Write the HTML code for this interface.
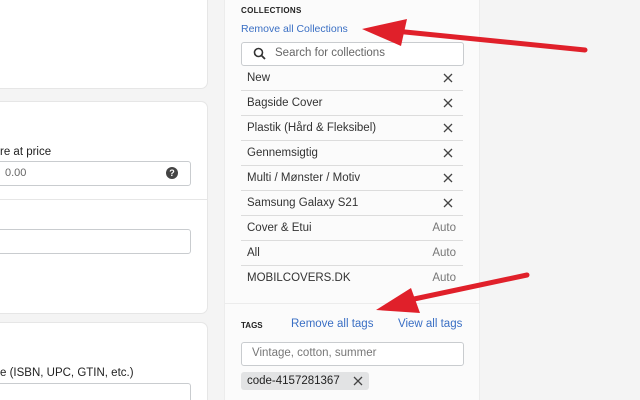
<!DOCTYPE html>
<html><head><style>
html,body{margin:0;width:640px;height:400px;overflow:hidden}
body{background:#f4f4f4;font-family:"Liberation Sans",sans-serif;position:relative}
.card{position:absolute;left:-10px;width:217px;background:#fff;border-radius:6px;box-shadow:0 0 0 1px #e6e6e6}
.t{position:absolute;font-size:11px;color:#222;white-space:nowrap}
.inp{position:absolute;border:1px solid #c9cccf;border-radius:3px;background:#fff;box-sizing:border-box}
.panel{position:absolute;left:224px;top:0;width:256px;height:400px;background:#fbfbfb;border-left:1px solid #ececec;border-right:1px solid #ececec;box-sizing:border-box}
.row{position:absolute;left:241px;width:222px;height:25px;border-bottom:1px solid #dcdcdc;font-size:11.5px;color:#333;box-sizing:border-box}
.row span{position:absolute;left:6px;top:6px}
.row svg{position:absolute;right:10px;top:7px}
.row i{position:absolute;right:7px;top:6px;font-style:normal;color:#777}
.blue{color:#3a6fc4}
</style></head><body>
<div class="card" style="top:-10px;height:98px"></div>
<div class="card" style="top:102px;height:211px"></div>
<div class="card" style="top:323px;height:77px;border-radius:6px 6px 0 0"></div>
<div class="t" style="left:0;top:146px;font-size:11.5px">re at price</div>
<div class="inp" style="left:-10px;top:161px;width:201px;height:25px"></div>
<div class="t" style="left:5px;top:167px;color:#666">0.00</div>
<div style="position:absolute;left:166px;top:167px;width:12px;height:12px;border-radius:50%;background:#444;color:#fff;font-size:9px;font-weight:bold;text-align:center;line-height:12px">?</div>
<div style="position:absolute;left:0;top:199px;width:207px;height:1px;background:#e6e6e6"></div>
<div class="inp" style="left:-10px;top:229px;width:201px;height:25px"></div>
<div class="t" style="left:0;top:367px;font-size:11.5px">e (ISBN, UPC, GTIN, etc.)</div>
<div class="inp" style="left:-10px;top:383px;width:201px;height:17px;border-bottom:none;border-radius:3px 3px 0 0"></div>

<div class="panel"></div>
<div class="t" style="left:241px;top:6px;font-size:8px;font-weight:bold;letter-spacing:.3px">COLLECTIONS</div>
<div class="t blue" style="left:241px;top:23px;font-size:10.5px">Remove all Collections</div>
<div class="inp" style="left:241px;top:42px;width:223px;height:24px"></div>
<svg style="position:absolute;left:253px;top:47px" width="14" height="14" viewBox="0 0 14 14"><circle cx="5.5" cy="5.5" r="4" fill="none" stroke="#333" stroke-width="1.6"/><path d="M8.5 8.5L12 12" stroke="#333" stroke-width="1.8"/></svg>
<div class="t" style="left:275px;top:47px;color:#666;font-size:11.5px">Search for collections</div>
<div class="row" style="top:66px"><span>New</span><svg width="10" height="10"><path d="M1 1L9 9M9 1L1 9" stroke="#444" stroke-width="1.3"/></svg></div>
<div class="row" style="top:91px"><span>Bagside Cover</span><svg width="10" height="10"><path d="M1 1L9 9M9 1L1 9" stroke="#444" stroke-width="1.3"/></svg></div>
<div class="row" style="top:116px"><span>Plastik (Hård &amp; Fleksibel)</span><svg width="10" height="10"><path d="M1 1L9 9M9 1L1 9" stroke="#444" stroke-width="1.3"/></svg></div>
<div class="row" style="top:141px"><span>Gennemsigtig</span><svg width="10" height="10"><path d="M1 1L9 9M9 1L1 9" stroke="#444" stroke-width="1.3"/></svg></div>
<div class="row" style="top:166px"><span>Multi / Mønster / Motiv</span><svg width="10" height="10"><path d="M1 1L9 9M9 1L1 9" stroke="#444" stroke-width="1.3"/></svg></div>
<div class="row" style="top:191px"><span>Samsung Galaxy S21</span><svg width="10" height="10"><path d="M1 1L9 9M9 1L1 9" stroke="#444" stroke-width="1.3"/></svg></div>
<div class="row" style="top:216px"><span>Cover &amp; Etui</span><i>Auto</i></div>
<div class="row" style="top:241px"><span>All</span><i>Auto</i></div>
<div class="row" style="top:266px;border-bottom:none"><span>MOBILCOVERS.DK</span><i>Auto</i></div>
<div style="position:absolute;left:225px;top:303px;width:255px;height:1px;background:#ececec"></div>
<div class="t" style="left:241px;top:321px;font-size:8px;font-weight:bold">TAGS</div>
<div class="t blue" style="left:291px;top:318px;font-size:11.5px">Remove all tags</div>
<div class="t blue" style="left:398px;top:318px;font-size:11.5px">View all tags</div>
<div class="inp" style="left:241px;top:342px;width:223px;height:24px"></div>
<div class="t" style="left:252px;top:347px;color:#777;font-size:11.5px">Vintage, cotton, summer</div>
<div style="position:absolute;left:241px;top:372px;width:128px;height:18px;background:#e2e3e4;border-radius:3px"></div>
<div class="t" style="left:247px;top:375px;font-size:11.5px">code-4157281367</div>
<svg style="position:absolute;left:353px;top:376px" width="10" height="10"><path d="M1 1L9 9M9 1L1 9" stroke="#444" stroke-width="1.3"/></svg>

<svg style="position:absolute;left:0;top:0" width="640" height="400">
<path d="M585 50L385 30" stroke="#e0202a" stroke-width="5" stroke-linecap="round"/>
<path d="M362 29L407 19L401 46Z" fill="#e0202a"/>
<path d="M527 275L400 302" stroke="#e0202a" stroke-width="5" stroke-linecap="round"/>
<path d="M376 310L411 288L420 313Z" fill="#e0202a"/>
</svg>
</body></html>
